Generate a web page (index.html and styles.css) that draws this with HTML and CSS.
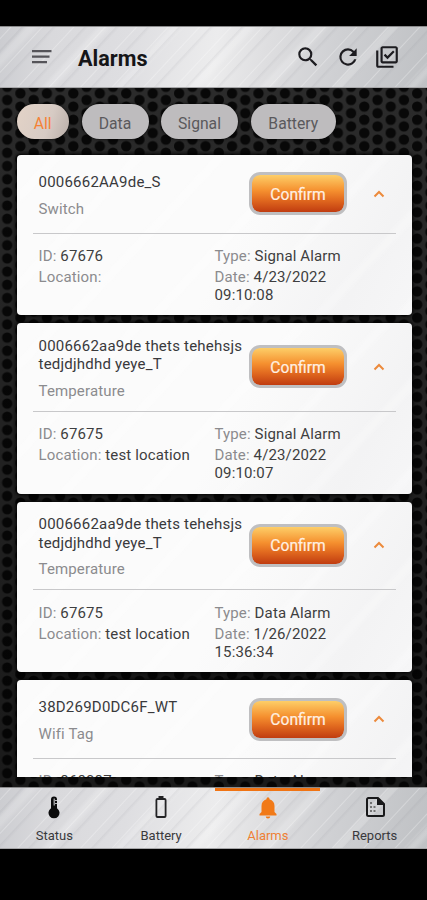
FILE: index.html
```
<!DOCTYPE html>
<html lang="en">
<head>
<meta charset="utf-8">
<title>Alarms</title>
<link rel="stylesheet" href="styles.css">
</head>
<body>
<div class="app">
  <header class="bar metal">
    <svg class="menu" width="22" height="18" viewBox="0 0 22 18"><path d="M1 3.200h19.500M1 8.700h17.500M1 14.200h15" stroke="#555459" stroke-width="2.300"/></svg>
    <h1>Alarms</h1>
    <div class="actions">
      <svg width="26" height="26" viewBox="0 0 24 24"><path fill="#1d1c20" d="M15.500 14h-.79l-.28-.27A6.470 6.470 0 0 0 16 9.500 6.500 6.500 0 1 0 9.500 16c1.610 0 3.090-.59 4.230-1.570l.27.28v.79l5 4.990L20.490 19l-4.990-5zm-6 0C7.010 14 5 11.990 5 9.500S7.010 5 9.500 5 14 7.010 14 9.500 11.990 14 9.500 14z"/></svg>
      <svg width="26" height="26" viewBox="0 0 24 24"><path fill="#1d1c20" d="M17.650 6.350A7.958 7.958 0 0 0 12 4a8 8 0 1 0 7.730 10h-2.080A6 6 0 1 1 12 6c1.660 0 3.140.69 4.220 1.780L13 11h7V4l-2.350 2.350z"/></svg>
      <svg width="26" height="26" viewBox="0 0 24 24"><path fill="#1d1c20" d="M20 4v12H8V4h12m0-2H8c-1.100 0-2 .9-2 2v12c0 1.100.9 2 2 2h12c1.100 0 2-.9 2-2V4c0-1.100-.9-2-2-2zm-7.530 12L9 10.500l1.400-1.410 2.070 2.080L17.600 6 19 7.410 12.470 14zM4 6H2v14c0 1.100.9 2 2 2h14v-2H4V6z"/></svg>
    </div>
  </header>

  <main>
    <svg class="mesh" width="427" height="699" aria-hidden="true">
      <defs>
        <pattern id="hex" width="26.450" height="13.200" patternUnits="userSpaceOnUse" patternTransform="translate(0.600 5.400)">
          <rect width="26.450" height="13.200" fill="#2b2b2b"/>
          <g fill="#080808"><circle cx="6.600" cy="6.600" r="5.200"/><circle cx="19.830" cy="0" r="5.200"/><circle cx="19.830" cy="13.200" r="5.200"/></g>
        </pattern>
        <linearGradient id="shade" x1="0" x2="0" y1="0" y2="1"><stop offset="0" stop-opacity="0"/><stop offset=".3" stop-opacity=".15"/><stop offset="1" stop-opacity=".4"/></linearGradient>
      </defs>
      <rect width="427" height="699" fill="url(#hex)"/>
      <rect width="427" height="699" fill="url(#shade)"/>
    </svg>
    <nav class="chips">
      <button class="chip on">All</button><button class="chip data">Data</button><button class="chip signal">Signal</button><button class="chip battery">Battery</button>
    </nav>
    <div class="list">
      <article class="card short">
        <div class="top"><div class="names"><h2>0006662AA9de_S</h2><p>Switch</p></div><button class="confirm">Confirm</button><svg class="chev" width="12" height="8" viewBox="0 0 12 8"><path d="M1.500 6.500 6 2l4.500 4.500"/></svg></div>
        <div class="info"><div><p>ID: <b>67676</b></p><p>Location:</p></div><div><p>Type: <b>Signal Alarm</b></p><p>Date: <b>4/23/2022<br>09:10:08</b></p></div></div>
      </article>
      <article class="card">
        <div class="top"><div class="names"><h2>0006662aa9de thets tehehsjs<br>tedjdjhdhd yeye_T</h2><p>Temperature</p></div><button class="confirm">Confirm</button><svg class="chev" width="12" height="8" viewBox="0 0 12 8"><path d="M1.500 6.500 6 2l4.500 4.500"/></svg></div>
        <div class="info"><div><p>ID: <b>67675</b></p><p>Location: <b>test location</b></p></div><div><p>Type: <b>Signal Alarm</b></p><p>Date: <b>4/23/2022<br>09:10:07</b></p></div></div>
      </article>
      <article class="card">
        <div class="top"><div class="names"><h2>0006662aa9de thets tehehsjs<br>tedjdjhdhd yeye_T</h2><p>Temperature</p></div><button class="confirm">Confirm</button><svg class="chev" width="12" height="8" viewBox="0 0 12 8"><path d="M1.500 6.500 6 2l4.500 4.500"/></svg></div>
        <div class="info"><div><p>ID: <b>67675</b></p><p>Location: <b>test location</b></p></div><div><p>Type: <b>Data Alarm</b></p><p>Date: <b>1/26/2022<br>15:36:34</b></p></div></div>
      </article>
      <article class="card short">
        <div class="top"><div class="names"><h2>38D269D0DC6F_WT</h2><p>Wifi Tag</p></div><button class="confirm">Confirm</button><svg class="chev" width="12" height="8" viewBox="0 0 12 8"><path d="M1.500 6.500 6 2l4.500 4.500"/></svg></div>
        <div class="info"><div><p>ID: <b>868087</b></p></div><div><p>Type: <b>Data Alarm</b></p></div></div>
      </article>
    </div>
  </main>

  <footer class="tabs metal">
    <a class="tab"><svg width="24" height="24" viewBox="0 0 24 24"><path fill="#0b0b0c" d="M9 4.500a3 3 0 0 1 6 0v8.700a5.500 5.500 0 1 1-6 0z"/><path d="M12.200 3.500v7M13 5.500h2M13 8.500h2" stroke="#b8b8bb" stroke-width="1.200"/></svg>Status</a>
    <a class="tab"><svg width="24" height="24" viewBox="0 0 24 24"><path fill="#222224" d="M9.500 1h5v2h1a2 2 0 0 1 2 2v16a2 2 0 0 1-2 2h-7a2 2 0 0 1-2-2V5a2 2 0 0 1 2-2h1zM8.300 5v16h7.400v-16z" fill-rule="evenodd"/></svg>Battery</a>
    <a class="tab on"><svg width="24" height="24" viewBox="0 0 24 24"><path fill="#f17a18" d="M12 23.500c1.200 0 2.200-.9 2.200-2H9.800c0 1.100 1 2 2.200 2zm6.500-6.500v-6c0-3.300-1.800-6-5-6.700v-.6a1.500 1.500 0 0 0-3 0v.6c-3.200.7-5 3.400-5 6.700v6l-2 2v1.500h17V19z"/></svg>Alarms</a>
    <a class="tab"><svg width="24" height="24" viewBox="0 0 24 24"><path fill="none" stroke="#18181a" stroke-width="2" stroke-linejoin="round" d="M5 3h10l6 6v10.500a1.500 1.500 0 0 1-1.500 1.500h-14A1.500 1.500 0 0 1 4 19.500V4.500A1.500 1.500 0 0 1 5.500 3z"/><path fill="#18181a" d="M14 2.500 21.500 10H14z"/><path d="M7 8h2M7 12h2M7 16h2M10.500 12h2M10.500 16h2" stroke="#555" stroke-width="1.400"/></svg>Reports</a>
  </footer>
</div>
</body>
</html>
```
FILE: styles.css
```
* { box-sizing: border-box; }
body { margin: 0; background: #000; font-family: Roboto, "Liberation Sans", sans-serif; }
h1, h2, p { margin: 0; font-weight: 400; }
button { font: inherit; border: 0; padding: 0; }
b { font-weight: 400; color: #3e3e40; }
.app { width: 427px; height: 900px; padding: 26px 0 51px; display: flex; flex-direction: column; overflow: hidden; background: #000; }

.metal {
  background:
    repeating-linear-gradient(133deg, transparent 0 7px, rgba(255,255,255,.28) 8px, transparent 9px 15px, rgba(120,120,130,.09) 16px, transparent 19px 23px),
    repeating-linear-gradient(133deg, transparent 0 17px, rgba(255,255,255,.2) 21px 25px, transparent 30px 53px),
    linear-gradient(100deg, #cbccd0 0%, #d9d9dc 12%, #dedee1 30%, #ececed 50%, #dedee0 62%, #cfd0d3 78%, #bfc1c4 100%);
  border-top: 1px solid #8b8b8c;
  border-bottom: 1px solid #a7a7a9;
}
.bar { height: 62px; flex: none; display: flex; align-items: center; padding: 0 27px 0 31px; }
.bar h1 { margin-left: 25px; font-size: 21.600px; font-weight: 700; color: #151517; line-height: 30px; padding-top: 3px; }
.actions { margin-left: auto; display: flex; gap: 13.500px; }

main { position: relative; height: 699px; flex: none; padding: 16px 15px 10px 16.500px; display: flex; flex-direction: column; isolation: isolate; background: #0b0b0b; }
.mesh { position: absolute; inset: 0; z-index: -1; }
.chips { display: flex; flex: none; height: 35px; margin-bottom: 12px; }
.chip { height: 35px; border-radius: 18px; background: #bebcbe; color: #5a595c; font-size: 15.700px; padding-top: 3px; box-shadow: 0 0 3px #000; }
.chip.on { width: 52.500px; color: #f58236; background: linear-gradient(110deg, #e3d3c7, #d7cbc4 60%, #b9aea8); }
.chip.data { width: 67px; margin-left: 12.500px; }
.chip.signal { width: 77px; margin-left: 12.500px; }
.chip.battery { width: 84.500px; margin-left: 13px; }

.list { flex: 1; min-height: 0; overflow: hidden; display: flex; flex-direction: column; gap: 8px; margin: 0 -8px; padding: 4px 8px 0; }
.card { flex: none; height: 170.700px; border-radius: 4px; padding: 0 16.500px; box-shadow: 0 0 4px 1px #000; background:
  repeating-linear-gradient(133deg, transparent 0 23px, rgba(255,255,255,.22) 28px 32px, transparent 37px 60px),
  linear-gradient(120deg, #fbfbfb 0 55%, #f3f3f4 85%, #f6f6f7); }
.card.short { height: 160px; }
.top { display: flex; align-items: center; height: 88.500px; border-bottom: 1px solid #c8c8ca; padding: 0 10.500px 0 5.500px; }
.card.short .top { height: 78.500px; }
.names { width: 210.500px; flex: none; white-space: nowrap; padding-top: 3px; }
.names h2 { font-size: 15px; letter-spacing: .22px; line-height: 18.500px; color: #39393c; }
.names p { margin-top: 8px; font-size: 15px; letter-spacing: .15px; line-height: 18px; color: #8b8b8e; }
.confirm { flex: none; width: 98px; height: 43px; border: 3px solid #bfbfc1; border-radius: 11px; color: #fff0e2; font-size: 15.600px; font-weight: 400; -webkit-text-stroke: .2px #fff0e2; padding-top: 2px; background: linear-gradient(#fdce68, #f5902f 42%, #e1691f 68%, #c03c10) padding-box, #bfbfc1; }
.chev { margin-left: auto; }
.chev path { fill: none; stroke: #ec8a3c; stroke-width: 2; }
.info { display: grid; grid-template-columns: 176px 1fr; padding: 13.500px 0 0 5.500px; font-size: 15px; letter-spacing: .14px; line-height: 18px; color: #8b8b8e; white-space: nowrap; }
.info p + p { margin-top: 3px; }

.tabs { height: 62px; flex: none; display: grid; grid-template-columns: repeat(4, 1fr); }
.tab { display: flex; flex-direction: column; align-items: center; padding: 7px 0 0 2px; font-size: 13px; line-height: 16px; color: #39393c; gap: 8.500px; position: relative; }
.tab.on { color: #ee8034; }
.tab.on::before { content: ""; position: absolute; left: 1px; right: 0; top: 0; height: 3px; background: #f07414; }
```
